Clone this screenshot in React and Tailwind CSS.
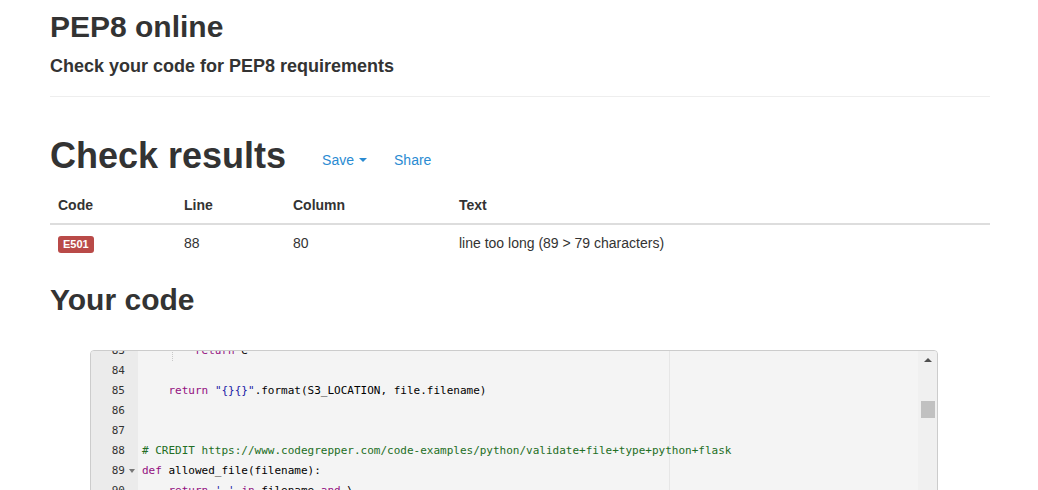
import React from 'react';

const KW = 'text-[#930f80]';
const STR = 'text-[#1a1aa6]';
const CMT = 'text-[#236e24]';

// visible lines of the editor, starting at line 83 (partly scrolled off)
const lines = [
  { n: 83, guide: true, parts: [['        ', ''], ['return', KW], [' e', '']] },
  { n: 84, parts: [] },
  { n: 85, parts: [['    ', ''], ['return', KW], [' ', ''], ['"{}{}"', STR], ['.format(S3_LOCATION, file.filename)', '']] },
  { n: 86, parts: [] },
  { n: 87, parts: [] },
  { n: 88, parts: [['# CREDIT https://www.codegrepper.com/code-examples/python/validate+file+type+python+flask', CMT]] },
  { n: 89, fold: true, parts: [['def', KW], [' allowed_file(filename):', '']] },
  { n: 90, guide: false, parts: [['    ', ''], ['return', KW], [' ', ''], ["'.'", STR], [' ', ''], ['in', KW], [' filename ', ''], ['and', KW], [' \\', '']] },
];

function CodeEditor() {
  return (
    <div className="ml-[40px] w-[848px] h-[300px] border border-[#cccccc] rounded-t-[4px] bg-[#f4f4f4] flex overflow-hidden">
      {/* gutter */}
      <div className="w-[47px] bg-[#ebebeb] overflow-hidden">
        <div className="mt-[-10px]">
          {lines.map((l) => (
            <div key={l.n} className="h-[20px] flex items-center justify-end pr-[13px] relative text-[#333] text-[11px]">
              {l.n}
              {l.fold && (
                <span className="absolute right-[3px] top-[8px] w-0 h-0 border-l-[3px] border-r-[3px] border-t-[4px] border-l-transparent border-r-transparent border-t-[#777]" />
              )}
            </div>
          ))}
        </div>
      </div>
      {/* code */}
      <div className="flex-1 relative overflow-hidden">
        <div className="absolute top-0 bottom-0 left-[531px] w-px bg-[#e6e6e6]" />
        <div className="mt-[-10px] pl-[4px] relative">
          {lines.map((l) => (
            <div key={l.n} className="h-[20px] flex items-center whitespace-pre text-black relative">
              {l.guide && (
                <span className="absolute left-[30px] top-0 h-[20px] border-l border-dotted border-[#c8c8c8]" />
              )}
              {l.parts.map(([t, c], i) => (
                <span key={i} className={c}>{t}</span>
              ))}
            </div>
          ))}
        </div>
      </div>
      {/* scrollbar */}
      <div className="w-[19px] bg-[#f0f0f0] flex flex-col items-center">
        <span className="mt-[7px] w-0 h-0 border-l-[4px] border-r-[4px] border-b-[4px] border-l-transparent border-r-transparent border-b-[#505050]" />
        <div className="mt-[39px] w-[14px] h-[17px] bg-[#c1c1c1]" />
      </div>
    </div>
  );
}

export default function App() {
  return (
    <div className="h-[490px] overflow-hidden bg-white text-[#333] text-[14px] leading-[20px]" style={{ fontFamily: '"Liberation Sans", Arial, sans-serif' }}>
      <div className="ml-[50px] w-[940px]">
        <h1 className="mt-[10px] text-[30px] leading-[33px] font-bold">PEP8 online</h1>
        <p className="mt-[13px] text-[18px] leading-[20px] font-bold">Check your code for PEP8 requirements</p>
        <hr className="mt-[20px] border-0 border-t border-[#eeeeee]" />

        <div className="mt-[39px] flex items-center">
          <h1 className="text-[36px] leading-[40px] font-bold">Check results</h1>
          <div className="ml-[36px] mt-[8px] flex items-center text-[#2a8bd2]">
            <a className="flex items-center">
              Save
              <span className="ml-[5px] w-0 h-0 border-l-[4px] border-r-[4px] border-t-[4px] border-l-transparent border-r-transparent border-t-[#2a8bd2]" />
            </a>
            <a className="ml-[27px]">Share</a>
          </div>
        </div>

        <table className="mt-[11px] w-full border-collapse">
          <thead>
            <tr className="border-b-2 border-[#dddddd]">
              <th className="w-[126px] p-[8px] text-left font-bold">Code</th>
              <th className="w-[109px] p-[8px] text-left font-bold">Line</th>
              <th className="w-[166px] p-[8px] text-left font-bold">Column</th>
              <th className="p-[8px] text-left font-bold">Text</th>
            </tr>
          </thead>
          <tbody>
            <tr>
              <td className="p-[8px]">
                <span className="inline-block bg-[#b94a48] text-white text-[11px] font-bold leading-none px-[5px] pt-[3px] pb-[3px] rounded-[3px] align-middle">E501</span>
              </td>
              <td className="p-[8px]">88</td>
              <td className="p-[8px]">80</td>
              <td className="p-[8px]">line too long (89 &gt; 79 characters)</td>
            </tr>
          </tbody>
        </table>

        <h2 className="mt-[22px] text-[30px] leading-[33px] font-bold">Your code</h2>

        <div className="mt-[34px] text-[11px]" style={{ fontFamily: '"DejaVu Sans Mono", monospace' }}>
          <CodeEditor />
        </div>
      </div>
    </div>
  );
}
